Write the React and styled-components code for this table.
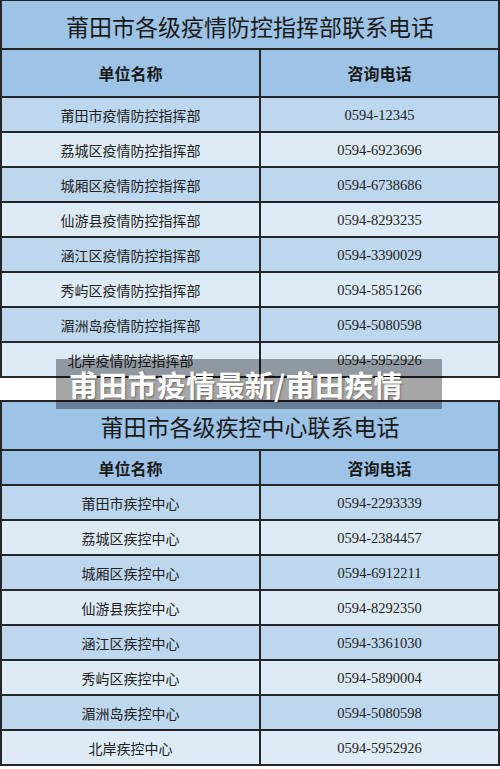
import React from "react";
import styled, { createGlobalStyle } from "styled-components";

const commandRows = [
  ["莆田市疫情防控指挥部", "0594-12345"],
  ["荔城区疫情防控指挥部", "0594-6923696"],
  ["城厢区疫情防控指挥部", "0594-6738686"],
  ["仙游县疫情防控指挥部", "0594-8293235"],
  ["涵江区疫情防控指挥部", "0594-3390029"],
  ["秀屿区疫情防控指挥部", "0594-5851266"],
  ["湄洲岛疫情防控指挥部", "0594-5080598"],
  ["北岸疫情防控指挥部", "0594-5952926"],
];

const cdcRows = [
  ["莆田市疾控中心", "0594-2293339"],
  ["荔城区疾控中心", "0594-2384457"],
  ["城厢区疾控中心", "0594-6912211"],
  ["仙游县疾控中心", "0594-8292350"],
  ["涵江区疾控中心", "0594-3361030"],
  ["秀屿区疾控中心", "0594-5890004"],
  ["湄洲岛疾控中心", "0594-5080598"],
  ["北岸疾控中心", "0594-5952926"],
];

const PhoneTable = ({ title, rows, titleHeight, headHeight, topBorder }) => {
  return (
    <Table $top={topBorder}>
      <TitleRow $h={titleHeight}>{title}</TitleRow>
      <Grid>
        <HeadCell $h={headHeight} $left>单位名称</HeadCell>
        <HeadCell $h={headHeight}>咨询电话</HeadCell>
        {rows.map(([name, phone], i) => (
          <React.Fragment key={name}>
            <NameCell $alt={i % 2 === 1} $left>{name}</NameCell>
            <PhoneCell $alt={i % 2 === 1}>{phone}</PhoneCell>
          </React.Fragment>
        ))}
      </Grid>
    </Table>
  );
};

const App = () => {
  return (
    <>
      <GlobalStyle />
      <Page>
        <PhoneTable
          title="莆田市各级疫情防控指挥部联系电话"
          rows={commandRows}
          titleHeight={49}
          headHeight={48}
          topBorder={1}
        />
        <Gap />
        <PhoneTable
          title="莆田市各级疾控中心联系电话"
          rows={cdcRows}
          titleHeight={51}
          headHeight={35}
          topBorder={0}
        />
        <Banner>甫田市疫情最新/甫田疾情</Banner>
      </Page>
    </>
  );
};

export default App;

const GlobalStyle = createGlobalStyle`
  * { box-sizing: border-box; }
  body {
    margin: 0;
    background: #ffffff;
    font-family: "Noto Sans CJK SC", "Noto Sans", sans-serif;
  }
`;

const Page = styled.div`
  position: relative;
  width: 500px;
  height: 769px;
  display: flex;
  flex-direction: column;
  background: #ffffff;
  overflow: hidden;
`;

const Table = styled.div`
  display: flex;
  flex-direction: column;
  border-left: 2px solid #262626;
  border-right: 2px solid #262626;
  border-top: ${(p) => p.$top}px solid #262626;
`;

const TitleRow = styled.div`
  height: ${(p) => p.$h}px;
  display: flex;
  align-items: center;
  justify-content: center;
  padding-top: 3px;
  background: #9dc3e6;
  border-bottom: 2px solid #262626;
  font-size: 23px;
  font-weight: 400;
  color: #1a1a1a;
`;

const Grid = styled.div`
  display: grid;
  grid-template-columns: 259px 1fr;
`;

const Cell = styled.div`
  height: 35px;
  display: flex;
  align-items: center;
  justify-content: center;
  border-bottom: 2px solid #262626;
  border-right: ${(p) => (p.$left ? "2px solid #262626" : "none")};
  color: #222222;
`;

const HeadCell = styled(Cell)`
  height: ${(p) => p.$h}px;
  background: #9dc3e6;
  font-size: 16px;
  font-weight: 700;
  color: #1a1a1a;
`;

const NameCell = styled(Cell)`
  background: ${(p) => (p.$alt ? "#ddebf7" : "#bdd7ee")};
  font-size: 14px;
  font-weight: 400;
  padding-top: 1px;
`;

const PhoneCell = styled(Cell)`
  background: ${(p) => (p.$alt ? "#ddebf7" : "#bdd7ee")};
  font-family: "Liberation Serif", "Noto Sans CJK SC", serif;
  font-size: 14.5px;
  padding-top: 1px;
`;

const Gap = styled.div`
  height: 24px;
  flex-shrink: 0;
  background: #ffffff;
  border-bottom: 2px solid #262626;
  margin-bottom: -2px;
  position: relative;
  z-index: 0;
`;

const Banner = styled.div`
  position: absolute;
  left: 56px;
  top: 359px;
  width: 386px;
  height: 50px;
  display: flex;
  align-items: center;
  padding-left: 13px;
  background: rgba(0, 0, 0, 0.35);
  color: #ffffff;
  font-size: 29px;
  font-weight: 700;
  letter-spacing: 0.3px;
  text-shadow: 1px 1px 2px rgba(0, 0, 0, 0.35);
`;
